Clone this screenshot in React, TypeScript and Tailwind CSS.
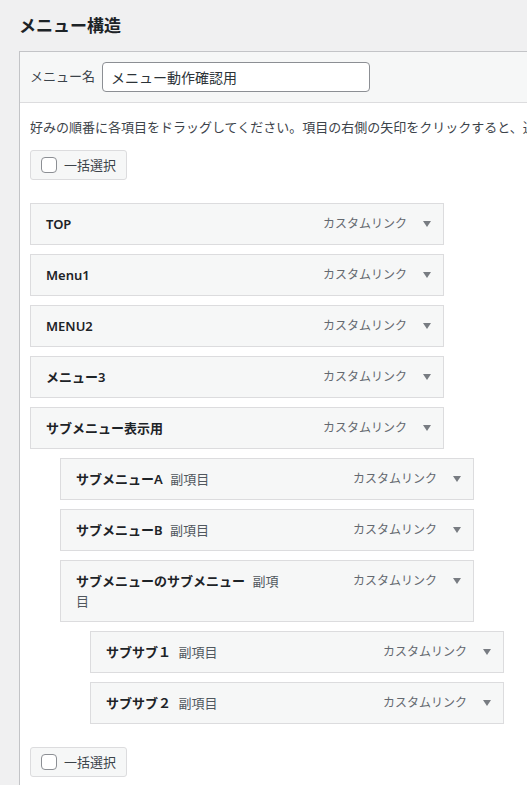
import React from "react";

interface MenuItem {
  title: string;
  depth: number;
  sub?: boolean;
}

const items: MenuItem[] = [
  { title: "TOP", depth: 0 },
  { title: "Menu1", depth: 0 },
  { title: "MENU2", depth: 0 },
  { title: "メニュー3", depth: 0 },
  { title: "サブメニュー表示用", depth: 0 },
  { title: "サブメニューA", depth: 1, sub: true },
  { title: "サブメニューB", depth: 1, sub: true },
  { title: "サブメニューのサブメニュー", depth: 1, sub: true },
  { title: "サブサブ１", depth: 2, sub: true },
  { title: "サブサブ２", depth: 2, sub: true },
];

const indent = ["ml-0", "ml-[30px]", "ml-[60px]"];

const BulkSelect = ({ className = "" }: { className?: string }) => (
  <label
    className={`flex h-[30px] w-[97px] items-center gap-[7px] rounded-[3px] border border-[#dcdcde] bg-[#f6f7f7] px-[10px] text-[13px] text-[#3c434a] ${className}`}
  >
    <span className="h-[16px] w-[16px] shrink-0 rounded-[4px] border border-[#8c8f94] bg-white" />
    <span className="leading-[20px] whitespace-nowrap">一括選択</span>
  </label>
);

const ItemBar = ({ item }: { item: MenuItem }) => (
  <li className={`mb-[9px] w-[414px] ${indent[item.depth]}`}>
    <div className="flex items-start border border-[#dcdcde] bg-[#f6f7f7] py-[10px] pl-[15px] pr-[12px]">
      <div className="min-w-0 flex-1 text-[13px] leading-[20px] font-semibold text-[#1d2327]">
        {item.title}
        {item.sub && (
          <>
            {" "}
            <span className="ml-[4px] font-normal text-[#50575e]">副項目</span>
          </>
        )}
      </div>
      <div className="flex h-[20px] w-[172px] shrink-0 items-center justify-end">
        <span className="text-[12px] text-[#646970] whitespace-nowrap">カスタムリンク</span>
        <svg className="ml-[16px]" width="8" height="6" viewBox="0 0 8 6">
          <path d="M0 0 H8 L4 6 Z" fill="#787c82" />
        </svg>
      </div>
    </div>
  </li>
);

export default function App() {
  return (
    <div
      className="h-[785px] w-full overflow-hidden bg-[#f0f0f1] pl-[19px] pt-[13px]"
      style={{ fontFamily: '"Noto Sans", "Noto Sans CJK JP", sans-serif' }}
    >
      <h2 className="text-[17px] leading-[26px] font-semibold text-[#1d2327]">メニュー構造</h2>

      <div className="mt-[12px] w-[800px] border border-[#c3c4c7] bg-white">
        <div className="flex items-center gap-[7px] border-b border-[#dcdcde] bg-[#f6f7f7] py-[10px] pl-[10px]">
          <span className="text-[13px] text-[#3c434a]">メニュー名</span>
          <input
            className="h-[30px] w-[268px] rounded-[4px] border border-[#8c8f94] bg-white px-[8px] text-[14px] text-[#2c3338] outline-none"
            defaultValue="メニュー動作確認用"
          />
        </div>

        <div className="pl-[10px] pt-[14px] pb-[20px]">
          <p className="text-[13px] leading-[20px] text-[#3c434a] whitespace-nowrap">
            好みの順番に各項目をドラッグしてください。項目の右側の矢印をクリックすると、追加の設定オプションが表示されます。
          </p>
          <BulkSelect className="mt-[13px]" />

          <ul className="mt-[23px]">
            {items.map((item) => (
              <ItemBar key={item.title} item={item} />
            ))}
          </ul>

          <BulkSelect className="mt-[23px]" />
        </div>
      </div>
    </div>
  );
}
